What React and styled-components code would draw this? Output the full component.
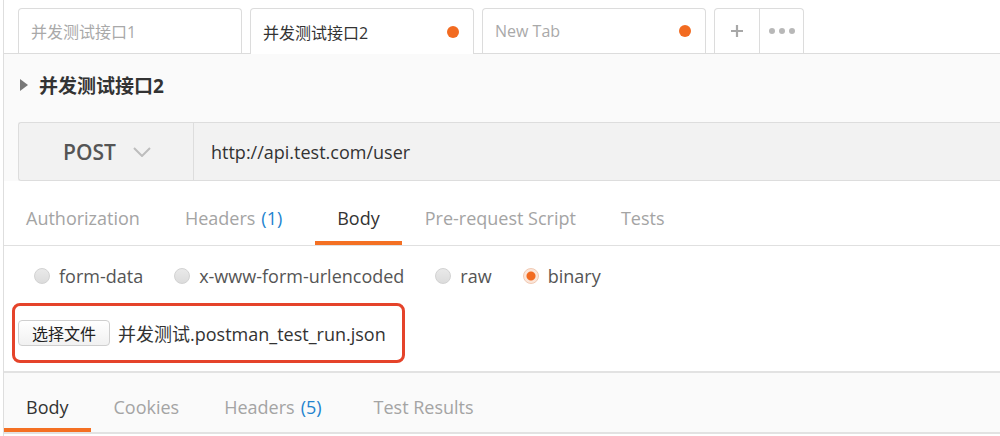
import styled, { createGlobalStyle } from 'styled-components';

const GlobalStyle = createGlobalStyle`
  html, body {
    margin: 0;
    padding: 0;
    background: #ffffff;
  }
  body {
    font-family: "Open Sans", "Noto Sans CJK SC", sans-serif;
    color: #333;
    width: 1000px;
    height: 436px;
    overflow: hidden;
  }
  * {
    box-sizing: border-box;
  }
`;

const requestTabs = [
  { label: 'Authorization' },
  { label: 'Headers', count: 1 },
  { label: 'Body', active: true },
  { label: 'Pre-request Script' },
  { label: 'Tests' },
];

const bodyModes = [
  { label: 'form-data' },
  { label: 'x-www-form-urlencoded' },
  { label: 'raw' },
  { label: 'binary', checked: true },
];

const responseTabs = [
  { label: 'Body', active: true },
  { label: 'Cookies' },
  { label: 'Headers', count: 5 },
  { label: 'Test Results' },
];

export default function App() {
  return (
    <>
      <GlobalStyle />
      <Main>
        <TabStrip>
          <Tab>
            <TabTitle>并发测试接口1</TabTitle>
          </Tab>
          <Tab active>
            <TabTitle active>并发测试接口2</TabTitle>
            <Dot />
          </Tab>
          <Tab>
            <TabTitle>New Tab</TabTitle>
            <Dot />
          </Tab>
          <TabActions>
            <ActionBtn>
              <svg width="14" height="14" viewBox="0 0 14 14">
                <path d="M7 1v12M1 7h12" stroke="#a8a8a8" strokeWidth="2.2" />
              </svg>
            </ActionBtn>
            <ActionBtn last>
              <svg width="28" height="8" viewBox="0 0 28 8">
                <circle cx="4" cy="4" r="3" fill="#b8b8b8" />
                <circle cx="14" cy="4" r="3" fill="#b8b8b8" />
                <circle cx="24" cy="4" r="3" fill="#b8b8b8" />
              </svg>
            </ActionBtn>
          </TabActions>
        </TabStrip>

        <Header>
          <TitleRow>
            <svg width="8" height="12" viewBox="0 0 8 12">
              <path d="M0 0L8 6L0 12Z" fill="#777" />
            </svg>
            <Title>并发测试接口2</Title>
          </TitleRow>
          <UrlBar>
            <Method>
              POST
              <svg width="18" height="10" viewBox="0 0 18 10">
                <path d="M1 1l8 8l8-8" fill="none" stroke="#bdbdbd" strokeWidth="2" />
              </svg>
            </Method>
            <Url>http://api.test.com/user</Url>
          </UrlBar>
        </Header>

        <TabBar>
          {requestTabs.map((t) => (
            <SubTab key={t.label} active={t.active}>
              {t.label}
              {t.count !== undefined && <Count>({t.count})</Count>}
            </SubTab>
          ))}
        </TabBar>

        <RadioRow>
          {bodyModes.map((m) => (
            <RadioLabel key={m.label}>
              <Radio checked={m.checked} />
              {m.label}
            </RadioLabel>
          ))}
        </RadioRow>

        <FileBox>
          <FileButton>选择文件</FileButton>
          <FileName>并发测试.postman_test_run.json</FileName>
        </FileBox>

        <Response>
          {responseTabs.map((t) => (
            <SubTab key={t.label} active={t.active} compact>
              {t.label}
              {t.count !== undefined && <Count compact>({t.count})</Count>}
            </SubTab>
          ))}
        </Response>
      </Main>
    </>
  );
}

const Main = styled.div`
  margin-left: 3px;
  border-left: 1px solid #dedede;
  height: 436px;
  display: flex;
  flex-direction: column;
`;

const TabStrip = styled.div`
  display: flex;
  align-items: flex-end;
  gap: 8px;
  height: 54px;
  padding-left: 14px;
  border-bottom: 1px solid #dcdcdc;
  background: #ffffff;
`;

const Tab = styled.div`
  display: flex;
  align-items: center;
  justify-content: space-between;
  width: 224px;
  height: ${(p) => (p.active ? '46px' : '45px')};
  margin-bottom: ${(p) => (p.active ? '-1px' : '0')};
  padding: 0 14px 0 12px;
  border: 1px solid #dcdcdc;
  border-bottom: none;
  border-radius: 4px 4px 0 0;
  background: #ffffff;
`;

const TabTitle = styled.span`
  font-size: 16px;
  color: ${(p) => (p.active ? '#333' : '#a9a9a9')};
`;

const Dot = styled.span`
  width: 12px;
  height: 12px;
  border-radius: 50%;
  background: #f26b21;
`;

const TabActions = styled.div`
  display: flex;
  height: 45px;
  border: 1px solid #dcdcdc;
  border-bottom: none;
  border-radius: 4px 4px 0 0;
  background: #ffffff;
`;

const ActionBtn = styled.div`
  display: flex;
  align-items: center;
  justify-content: center;
  width: ${(p) => (p.last ? '43px' : '45px')};
  border-right: ${(p) => (p.last ? 'none' : '1px solid #dcdcdc')};
`;

const Header = styled.div`
  background: #fafafa;
  padding: 0 0 0 14px;
`;

const TitleRow = styled.div`
  display: flex;
  align-items: center;
  gap: 11px;
  height: 62px;
  padding-left: 2px;
  padding-bottom: 1px;
`;

const Title = styled.h1`
  margin: 0;
  font-size: 19px;
  font-weight: 700;
  color: #333;
`;

const UrlBar = styled.div`
  display: flex;
  height: 59px;
  margin-top: 6px;
  border: 1px solid #dddddd;
  border-right: none;
  border-radius: 3px 0 0 3px;
  background: #f2f2f2;
`;

const Method = styled.div`
  display: flex;
  align-items: center;
  gap: 17px;
  width: 175px;
  padding-left: 44px;
  border-right: 1px solid #dddddd;
  font-size: 21px;
  font-weight: 600;
  color: #555;
`;

const Url = styled.div`
  display: flex;
  align-items: center;
  padding-left: 17px;
  font-size: 18px;
  color: #333;
`;

const TabBar = styled.div`
  display: flex;
  height: 65px;
  border-bottom: 1px solid #e0e0e0;
  background: #ffffff;
`;

const SubTab = styled.div`
  padding: ${(p) => (p.compact ? '22px' : '25px')} 22px 11px;
  margin-right: 1px;
  line-height: 24px;
  font-size: 18px;
  white-space: nowrap;
  color: ${(p) => (p.active ? '#333' : '#a4a4a4')};
  border-bottom: 4px solid ${(p) => (p.active ? '#f47023' : 'transparent')};
`;

const Count = styled.span`
  margin-left: 6px;
  margin-right: ${(p) => (p.compact ? '7px' : '10px')};
  color: #2283cf;
`;

const RadioRow = styled.div`
  display: flex;
  align-items: center;
  gap: 31px;
  padding: 18px 0 0 30px;
  height: 42px;
`;

const RadioLabel = styled.label`
  display: flex;
  align-items: center;
  gap: 9px;
  line-height: 24px;
  font-size: 18px;
  color: #555;
`;

const Radio = styled.span`
  width: 16px;
  height: 16px;
  border-radius: 50%;
  border: 1px solid ${(p) => (p.checked ? '#f1c9b2' : '#d2d2d2')};
  background: ${(p) =>
    p.checked
      ? 'radial-gradient(circle, #f26b21 0 4px, #fbe6da 5px)'
      : 'linear-gradient(#e9e9e9, #dcdcdc)'};
`;

const FileBox = styled.div`
  display: flex;
  align-items: center;
  gap: 8px;
  width: 393px;
  height: 60px;
  margin: 15px 0 0 8px;
  padding: 0 0 0 3px;
  border: 3px solid #e5432a;
  border-radius: 8px;
`;

const FileButton = styled.button`
  height: 26px;
  width: 92px;
  padding: 0;
  border: 1px solid #cfcfcf;
  border-radius: 4px;
  background: linear-gradient(#ffffff, #f1f1f1);
  font-family: "Noto Sans CJK SC", sans-serif;
  font-size: 16px;
  color: #222;
`;

const FileName = styled.span`
  font-size: 18px;
  color: #333;
`;

const Response = styled.div`
  display: flex;
  margin-top: 8px;
  height: 63px;
  border-top: 2px solid #e2e2e2;
  border-bottom: 2px solid #e2e2e2;
  background: #fafafa;
`;
